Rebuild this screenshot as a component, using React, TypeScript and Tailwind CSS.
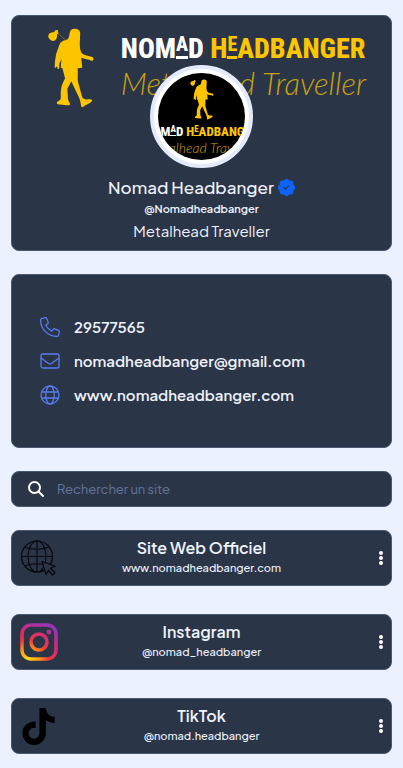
import type { ReactNode } from "react";
import { BsPatchCheckFill } from "react-icons/bs";
import { FaTiktok } from "react-icons/fa6";

const card = "rounded-lg border border-[#4a5871] bg-[#2b3548]";

function Walker({ className }: { className: string }) {
  return (
    <svg viewBox="145 84 142 242" className={className} fill="#fdc500" aria-hidden="true">
      <path d="M228 86C238 86 243 91 244 99L243 120C242 132 242 145 246 155C249 163 256 166 264 167L274 170C281 170 285 174 284 179C282 184 276 184 272 180L260 178L247 174L250 204L236 206C238 220 235 234 237 246L249 290C251 297 256 301 265 300C273 299 280 300 280 304C275 312 261 316 250 324C245 323 247 316 245 311C244 302 240 294 235 284L217 245L205 268L207 300C208 306 214 309 213 316C205 319 190 317 176 315C171 311 174 306 180 304C187 300 185 294 185 284C185 270 187 258 192 249L198 236L190 206L185 204L187 178L181 192L180 207L176 208L173 200L168 206C165 201 168 195 167 188L171 163L181 135C185 123 196 122 206 118C212 112 210 98 216 90C219 87 223 86 228 86Z" />
      <path d="M149 102C154 97 161 97 166 96C167 91 170 88 173 91L177 90L176 96L179 99L174 103C175 113 172 120 164 123C157 125 148 117 147 110Z" />
      <path d="M174 98L202 123" stroke="#b0901a" strokeWidth="1.5" />
    </svg>
  );
}

function Wordmark({ small = false }: { small?: boolean }) {
  const size = small ? "text-[13px] leading-4" : "text-[28px] leading-8";
  const raised = small
    ? "inline-block border-b border-current align-top text-[9px] leading-[11px]"
    : "inline-block border-b-3 border-current align-top text-[20px] leading-[23px]";
  const script = small ? "text-[14px] leading-4" : "text-[31px] leading-9";
  return (
    <div className="whitespace-nowrap">
      <div className={`${size} font-['Roboto_Condensed','Liberation_Sans_Narrow','Roboto',sans-serif] font-extrabold text-white`}>
        NOM<span className={raised}>A</span>D{" "}
        <span className="text-[#fdc500]">
          H<span className={raised}>E</span>ADBANGER
        </span>
      </div>
      <div className={`${script} font-['Lato',sans-serif] font-light italic text-[#c9a10f]`}>
        Metalhead Traveller
      </div>
    </div>
  );
}

function PhoneIcon() {
  return (
    <svg viewBox="-16 -16 544 544" className="size-5" fill="none" stroke="currentColor" strokeWidth="34" aria-hidden="true">
      <path d="M164.9 24.6c-7.7-18.6-28-28.5-47.4-23.2l-88 24C12.1 30.2 0 46 0 64C0 311.4 200.6 512 448 512c18 0 33.8-12.1 38.6-29.5l24-88c5.3-19.4-4.6-39.7-23.2-47.4l-96-40c-16.3-6.8-35.2-2.1-46.3 11.6L304.7 368C234.3 334.7 177.3 277.7 144 207.3L193.3 167c13.7-11.2 18.4-30 11.6-46.3l-40-96z" />
    </svg>
  );
}

function MailIcon() {
  return (
    <svg viewBox="0 0 20 20" className="size-5" fill="none" stroke="currentColor" strokeWidth="1.3" aria-hidden="true">
      <rect x="1" y="3" width="18" height="14" rx="2" />
      <path d="M1 7L8.5 12.5Q10 13.5 11.5 12.5L19 7" />
    </svg>
  );
}

function GlobeIcon() {
  return (
    <svg viewBox="0 0 20 20" className="size-5" fill="none" stroke="currentColor" strokeWidth="1.3" aria-hidden="true">
      <circle cx="10" cy="10" r="9" />
      <ellipse cx="10" cy="10" rx="4.2" ry="9" />
      <path d="M1.5 7H18.5M1.5 13H18.5" />
    </svg>
  );
}

function SiteIcon() {
  return (
    <svg viewBox="0 0 36 36" className="size-9" fill="none" stroke="#05070b" strokeWidth="1.2" aria-hidden="true">
      <circle cx="17" cy="16.5" r="15.5" />
      <ellipse cx="17" cy="16.5" rx="9" ry="15.5" />
      <path d="M17 1V32M1.5 16.5H32.5M4.5 7Q17 11.5 29.5 7M4.5 26Q17 21.5 29.5 26" />
      <path d="M22 21.5L35 26L30.5 28.5L35 32.5L32.5 35L28.5 30.5L26 34.5Z" fill="#2b3548" strokeLinejoin="round" />
    </svg>
  );
}

function InstagramIcon() {
  return (
    <svg viewBox="0 0 38 38" className="size-[38px]" aria-hidden="true">
      <defs>
        <radialGradient id="insta" cx="8" cy="37" r="39" gradientUnits="userSpaceOnUse">
          <stop offset="0" stopColor="#fedc15" />
          <stop offset="0.28" stopColor="#fb9a12" />
          <stop offset="0.52" stopColor="#f5383d" />
          <stop offset="0.76" stopColor="#d82b74" />
          <stop offset="1" stopColor="#9b35b5" />
        </radialGradient>
      </defs>
      <rect x="2" y="2" width="34" height="34" rx="9" fill="none" stroke="url(#insta)" strokeWidth="3.5" />
      <circle cx="19" cy="19" r="8" fill="none" stroke="url(#insta)" strokeWidth="3.5" />
      <circle cx="29" cy="9" r="2.4" fill="url(#insta)" />
    </svg>
  );
}

function Contact({ icon, href, children }: { icon: ReactNode; href: string; children: ReactNode }) {
  return (
    <li className="flex h-[34px] items-center gap-[14px]">
      <span className="text-[#587cf0]">{icon}</span>
      <a href={href} className="text-[15px] leading-6 font-semibold">{children}</a>
    </li>
  );
}

function SiteLink({ icon, title, label }: { icon: ReactNode; title: string; label: string }) {
  return (
    <li className={`${card} grid h-14 grid-cols-[40px_1fr_44px] items-center pr-1 pl-2`}>
      <span>{icon}</span>
      <a href="#" className="pb-1 text-center">
        <span className="block text-[16px] leading-6 font-semibold">{title}</span>
        <span className="block text-[11px] leading-4 font-medium">{label}</span>
      </a>
      <button type="button" aria-label={`Options ${title}`} className="flex h-8 items-center justify-end pr-1">
        <svg viewBox="0 0 4 14" className="h-[14px] w-1" fill="white" aria-hidden="true">
          <circle cx="2" cy="2" r="2" />
          <circle cx="2" cy="7" r="2" />
          <circle cx="2" cy="12" r="2" />
        </svg>
      </button>
    </li>
  );
}

export default function App() {
  return (
    <main className="min-h-screen bg-[#ebf1ff] px-[11px] pt-[15px] pb-[14px] font-['Plus_Jakarta_Sans','Inter',sans-serif] text-[#edf2fc]">
      <header className={`${card} flex flex-col items-center pb-[7px]`}>
        <div className="flex gap-[26px] pt-3 pl-[10px]">
          <Walker className="h-20 w-12" />
          <div className="pt-[5px]">
            <Wordmark />
          </div>
        </div>
        <div className="relative -mt-[43px] size-[103px] rounded-full border-4 border-[#e2eafb] bg-white p-1">
          <div className="flex size-full flex-col items-center overflow-hidden rounded-full bg-black pt-[6px]">
            <Walker className="h-[41px] w-6 shrink-0" />
            <div className="pt-1 text-center">
              <Wordmark small />
            </div>
          </div>
        </div>
        <h1 className="mt-[7px] flex items-center gap-1 text-[17px] leading-6 font-medium">
          Nomad Headbanger
          <BsPatchCheckFill className="size-[17px] text-[#0d63f8]" />
        </h1>
        <p className="text-[11px] leading-5 font-semibold">@Nomadheadbanger</p>
        <p className="text-[15px] leading-6">Metalhead Traveller</p>
      </header>

      <ul className={`${card} mt-[23px] py-[35px] pl-7`}>
        <Contact icon={<PhoneIcon />} href="tel:29577565">29577565</Contact>
        <Contact icon={<MailIcon />} href="mailto:nomadheadbanger@gmail.com">nomadheadbanger@gmail.com</Contact>
        <Contact icon={<GlobeIcon />} href="#">www.nomadheadbanger.com</Contact>
      </ul>

      <label className={`${card} mt-[23px] flex h-9 items-center gap-3 px-4`}>
        <svg viewBox="0 0 17 17" className="size-[17px] shrink-0" fill="none" stroke="white" strokeWidth="2" strokeLinecap="round" aria-hidden="true">
          <circle cx="6.5" cy="6.5" r="5.5" />
          <path d="M10.5 10.5L15 15" />
        </svg>
        <input
          type="search"
          aria-label="Rechercher un site"
          placeholder="Rechercher un site"
          className="min-w-0 flex-1 bg-transparent text-[13px] leading-5 outline-none placeholder:text-[#64759a]"
        />
      </label>

      <ul className="mt-[23px] flex flex-col gap-7">
        <SiteLink icon={<SiteIcon />} title="Site Web Officiel" label="www.nomadheadbanger.com" />
        <SiteLink icon={<InstagramIcon />} title="Instagram" label="@nomad_headbanger" />
        <SiteLink icon={<FaTiktok className="size-[37px] text-black" />} title="TikTok" label="@nomad.headbanger" />
      </ul>
    </main>
  );
}
